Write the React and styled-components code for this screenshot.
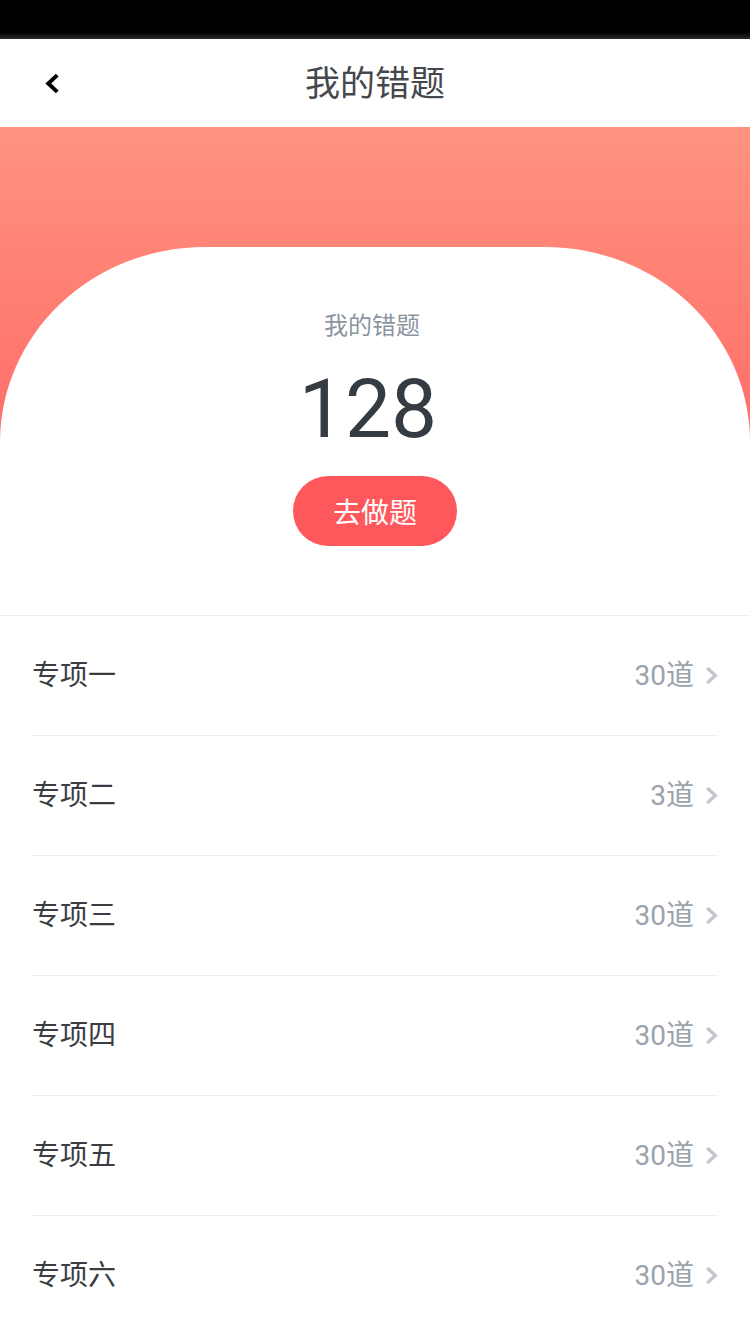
import React from 'react';
import styled, { createGlobalStyle } from 'styled-components';

const GlobalStyle = createGlobalStyle`
  * { box-sizing: border-box; }
  body {
    margin: 0;
    background: #fff;
    font-family: Roboto, "Noto Sans CJK SC", sans-serif;
  }
`

const Page = styled.div`
  width: 750px;
  min-height: 1334px;
  background: #fff;
`

const StatusBar = styled.div`
  height: 39px;
  background: linear-gradient(to bottom, #000 0, #000 32px, #2a2a2a 39px);
`

const NavBar = styled.div`
  height: 88px;
  display: flex;
  align-items: center;
  justify-content: center;
  position: relative;
  background: #fff;
`

const BackButton = styled.div`
  position: absolute;
  left: 45px;
  top: 34px;
  width: 15px;
  height: 21px;
  display: flex;
`

const Title = styled.h1`
  margin: 0 0 6px;
  font-size: 35px;
  font-weight: 400;
  color: #45484d;
`

const Hero = styled.div`
  background: linear-gradient(to bottom, #ff937f 0, #ff6d69 320px);
  padding-top: 120px;
`

const Card = styled.div`
  background: #fff;
  border-radius: 205px 205px 0 0 / 195px 195px 0 0;
  height: 369px;
  padding-top: 63px;
  display: flex;
  flex-direction: column;
  align-items: center;
  border-bottom: 1px solid #ebedef;
`

const Caption = styled.div`
  font-size: 24px;
  line-height: 32px;
  color: #8c959f;
  padding-right: 6px;
`

const Count = styled.div`
  margin-top: 26px;
  font-size: 82px;
  line-height: 82px;
  color: #353b43;
  padding-right: 14px;
`

const GoButton = styled.button`
  margin-top: 26px;
  width: 164px;
  height: 70px;
  border: none;
  border-radius: 35px;
  background: #ff585c;
  color: #fff;
  font-family: inherit;
  font-size: 28px;
  padding: 0;
`

const List = styled.div`
  padding: 0 32px;
`

const Row = styled.div`
  height: 120px;
  padding-bottom: 5px;
  display: flex;
  align-items: center;
  justify-content: space-between;
  border-bottom: 1px solid #ebedef;
`

const Label = styled.span`
  font-size: 28px;
  color: #3a3d42;
`

const Meta = styled.div`
  display: flex;
  align-items: center;
  gap: 11px;
  font-size: 28px;
  color: #9aa2ac;
`

const ChevronBox = styled.span`
  display: flex;
  margin-top: 4px;
`

function Chevron({ left, color, width, height }) {
  return (
    <svg width={width} height={height} viewBox="0 0 14 20" fill="none">
      <path
        d={left ? 'M11.5 2 L3 10 L11.5 18' : 'M2.5 2 L11 10 L2.5 18'}
        stroke={color}
        strokeWidth={3.8}
        strokeLinejoin="miter"
      />
    </svg>
  )
}

const items = [
  ['专项一', 30],
  ['专项二', 3],
  ['专项三', 30],
  ['专项四', 30],
  ['专项五', 30],
  ['专项六', 30],
]

function App() {
  return (
    <Page>
      <GlobalStyle />
      <StatusBar />
      <NavBar>
        <BackButton>
          <Chevron left color="#000" width={15} height={21} />
        </BackButton>
        <Title>我的错题</Title>
      </NavBar>
      <Hero>
        <Card>
          <Caption>我的错题</Caption>
          <Count>128</Count>
          <GoButton>去做题</GoButton>
        </Card>
      </Hero>
      <List>
        {items.map(([name, n]) => (
          <Row key={name}>
            <Label>{name}</Label>
            <Meta>
              {n}道
              <ChevronBox>
                <Chevron color="#c3c8ce" width={13} height={19} />
              </ChevronBox>
            </Meta>
          </Row>
        ))}
      </List>
    </Page>
  )
}

export default App
